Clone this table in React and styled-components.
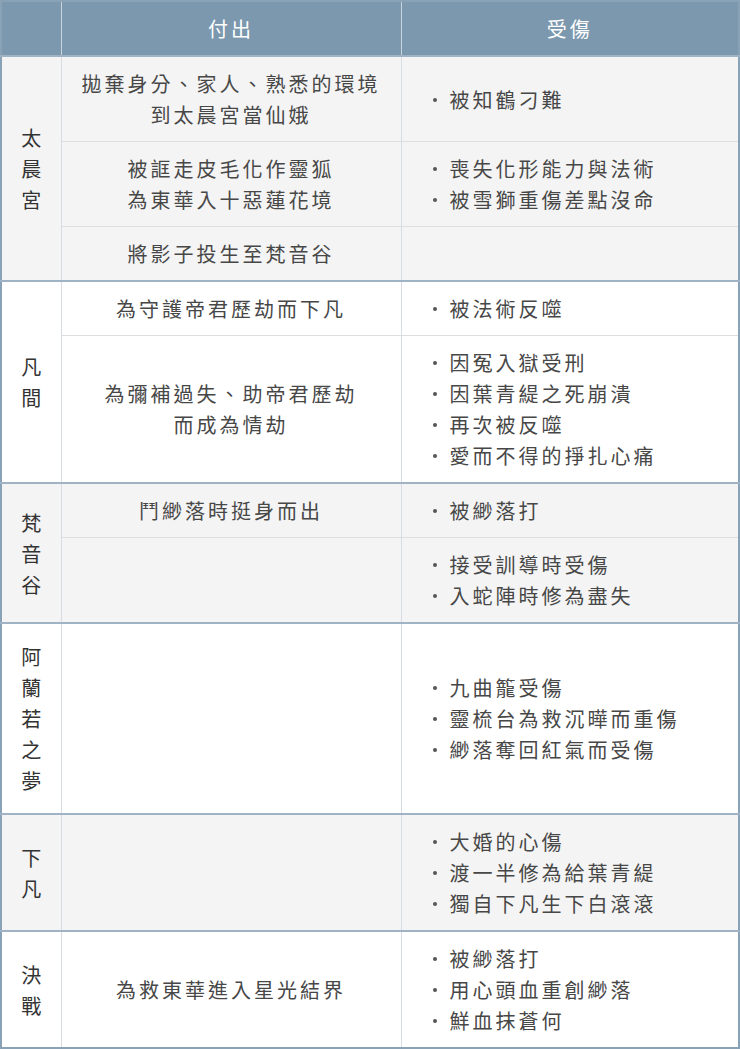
import React from "react";
import styled, { createGlobalStyle, css } from "styled-components";

const Global = createGlobalStyle`
  html, body { margin: 0; padding: 0; background: #ffffff; }
  body { font-family: "Noto Sans CJK TC", "Noto Sans CJK SC", "Noto Sans", sans-serif; }
`;

const Table = styled.table`
  width: 740px;
  table-layout: fixed;
  border-collapse: collapse;
  border: 2px solid #8aa2b6;
  color: #474747;
  font-size: 20px;
  line-height: 31px;
  letter-spacing: 3px;
`;

const HeadCell = styled.th`
  background: #7b98ae;
  color: #ffffff;
  font-weight: 400;
  height: 31px;
  padding: 11px 0 11px;
  text-align: center;
  border-left: 1px solid #c9d4dd;
  &:first-child { border-left: none; }
`;

const Row = styled.tr`
  background: ${(p) => (p.$shade ? "#f4f4f4" : "#ffffff")};
  ${(p) =>
    p.$groupStart
      ? css`
          border-top: 2px solid #9fb3c4;
        `
      : css`
          border-top: 1px solid #dedede;
        `}
`;

const LabelCell = styled.td`
  padding: 17px 0;
  text-align: center;
  vertical-align: middle;
  border-right: 1px solid #d6dce2;
  font-weight: 400;
  color: #333333;
`;

const Char = styled.span`
  display: block;
  letter-spacing: 0;
`;

const GiveCell = styled.td`
  padding: 11px 8px;
  text-align: center;
  vertical-align: middle;
  border-right: 1px solid #d6dce2;
`;

const HurtCell = styled.td`
  padding: 11px 10px 11px 48px;
  text-align: left;
  vertical-align: middle;
`;

const List = styled.ul`
  margin: 0;
  padding: 0;
  list-style: none;
`;

const Item = styled.li`
  position: relative;
  &::before {
    content: "";
    position: absolute;
    left: -17px;
    top: 14px;
    width: 4px;
    height: 4px;
    border-radius: 50%;
    background: #555555;
  }
`;

const Line = styled.span`
  display: block;
`;

const groups = [
  {
    label: "太晨宮",
    rows: [
      { give: ["拋棄身分、家人、熟悉的環境", "到太晨宮當仙娥"], hurt: ["被知鶴刁難"] },
      { give: ["被誆走皮毛化作靈狐", "為東華入十惡蓮花境"], hurt: ["喪失化形能力與法術", "被雪獅重傷差點沒命"] },
      { give: ["將影子投生至梵音谷"], hurt: [] },
    ],
  },
  {
    label: "凡間",
    rows: [
      { give: ["為守護帝君歷劫而下凡"], hurt: ["被法術反噬"] },
      {
        give: ["為彌補過失、助帝君歷劫", "而成為情劫"],
        hurt: ["因冤入獄受刑", "因葉青緹之死崩潰", "再次被反噬", "愛而不得的掙扎心痛"],
      },
    ],
  },
  {
    label: "梵音谷",
    rows: [
      { give: ["鬥緲落時挺身而出"], hurt: ["被緲落打"] },
      { give: [], hurt: ["接受訓導時受傷", "入蛇陣時修為盡失"] },
    ],
  },
  {
    label: "阿蘭若之夢",
    rows: [{ give: [], hurt: ["九曲籠受傷", "靈梳台為救沉曄而重傷", "緲落奪回紅氣而受傷"] }],
  },
  {
    label: "下凡",
    rows: [{ give: [], hurt: ["大婚的心傷", "渡一半修為給葉青緹", "獨自下凡生下白滾滾"] }],
  },
  {
    label: "決戰",
    rows: [{ give: ["為救東華進入星光結界"], hurt: ["被緲落打", "用心頭血重創緲落", "鮮血抹蒼何"] }],
  },
];

export default function App() {
  return (
    <>
      <Global />
      <Table>
        <colgroup>
          <col style={{ width: 60 }} />
          <col style={{ width: 340 }} />
          <col />
        </colgroup>
        <thead>
          <tr>
            <HeadCell />
            <HeadCell>付出</HeadCell>
            <HeadCell>受傷</HeadCell>
          </tr>
        </thead>
        <tbody>
          {groups.map((g, gi) =>
            g.rows.map((r, ri) => (
              <Row key={`${gi}-${ri}`} $shade={gi % 2 === 0} $groupStart={ri === 0}>
                {ri === 0 && (
                  <LabelCell rowSpan={g.rows.length}>
                    {Array.from(g.label).map((c, i) => (
                      <Char key={i}>{c}</Char>
                    ))}
                  </LabelCell>
                )}
                <GiveCell>
                  {r.give.map((t, i) => (
                    <Line key={i}>{t}</Line>
                  ))}
                </GiveCell>
                <HurtCell>
                  <List>
                    {r.hurt.map((t, i) => (
                      <Item key={i}>{t}</Item>
                    ))}
                  </List>
                </HurtCell>
              </Row>
            ))
          )}
        </tbody>
      </Table>
    </>
  );
}
